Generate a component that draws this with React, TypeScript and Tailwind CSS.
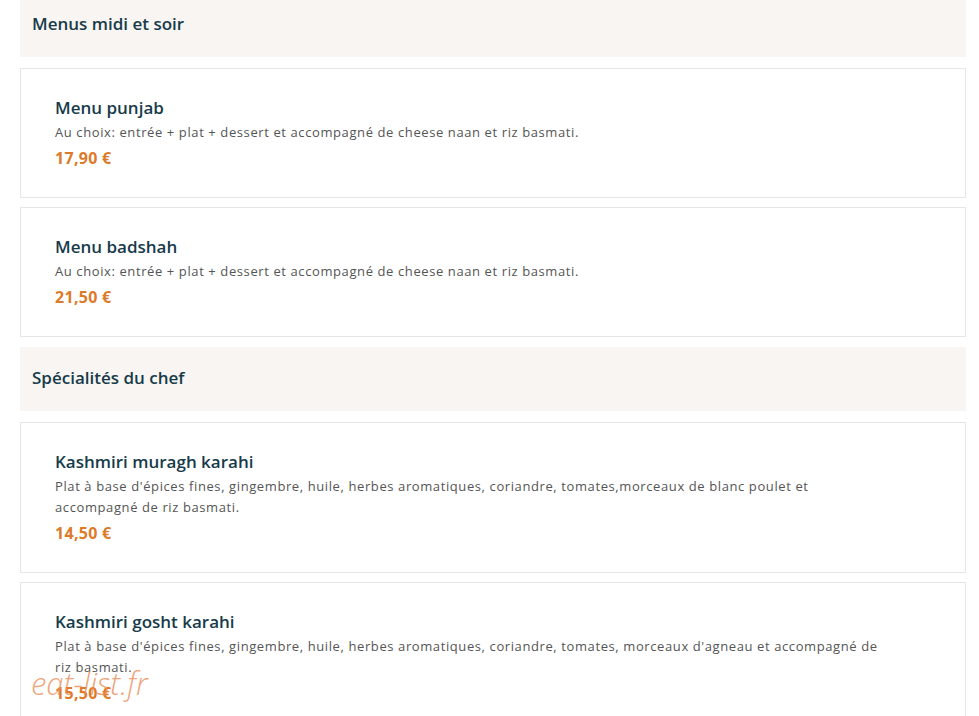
import React from "react";

type Item = { name: string; lines: string[]; price: string };

const sections: { title: string; items: Item[] }[] = [
  {
    title: "Menus midi et soir",
    items: [
      {
        name: "Menu punjab",
        lines: ["Au choix: entrée + plat + dessert et accompagné de cheese naan et riz basmati."],
        price: "17,90 €",
      },
      {
        name: "Menu badshah",
        lines: ["Au choix: entrée + plat + dessert et accompagné de cheese naan et riz basmati."],
        price: "21,50 €",
      },
    ],
  },
  {
    title: "Spécialités du chef",
    items: [
      {
        name: "Kashmiri muragh karahi",
        lines: [
          "Plat à base d'épices fines, gingembre, huile, herbes aromatiques, coriandre, tomates,morceaux de blanc poulet et",
          "accompagné de riz basmati.",
        ],
        price: "14,50 €",
      },
      {
        name: "Kashmiri gosht karahi",
        lines: [
          "Plat à base d'épices fines, gingembre, huile, herbes aromatiques, coriandre, tomates, morceaux d'agneau et accompagné de",
          "riz basmati.",
        ],
        price: "15,50 €",
      },
    ],
  },
];

function Card({ item }: { item: Item }) {
  return (
    <div className="border border-[#e6e6e6] bg-white px-[34px] py-[28px]">
      <div className="text-[17px] leading-[22px] font-semibold text-[#173b4a]">{item.name}</div>
      <div className="mt-[3px] text-[13px] leading-[21px] tracking-[0.6px] text-[#555555]">
        {item.lines.map((l, i) => (
          <div key={i} className="whitespace-nowrap">{l}</div>
        ))}
      </div>
      <div className="mt-[4px] text-[16px] leading-[22px] font-bold tracking-[0.3px] text-[#dd7a2a]">{item.price}</div>
    </div>
  );
}

export default function App() {
  return (
    <div
      className="relative h-[716px] w-[979px] overflow-hidden bg-white"
      style={{ fontFamily: "'Open Sans', 'Noto Sans', sans-serif" }}
    >
      <div className="ml-[20px] -mt-[7px] flex w-[946px] flex-col">
        {sections.map((s, si) => (
          <div key={si} className="flex flex-col">
            <div className={"flex h-[64px] items-center bg-[#f8f5f2] px-[12px] pb-[2px] " + (si > 0 ? "mt-[10px]" : "")}>
              <span className="text-[17px] font-semibold text-[#173b4a]">{s.title}</span>
            </div>
            <div className="mt-[11px] flex flex-col gap-[9px]">
              {s.items.map((it, ii) => (
                <Card key={ii} item={it} />
              ))}
            </div>
          </div>
        ))}
      </div>
      <div
        className="pointer-events-none absolute left-[31px] top-[668px] text-[31px] italic font-light leading-none text-[#ea8f5c] opacity-80"
        style={{ fontFamily: "'Open Sans', sans-serif" }}
      >
        eat-list.fr
      </div>
    </div>
  );
}
